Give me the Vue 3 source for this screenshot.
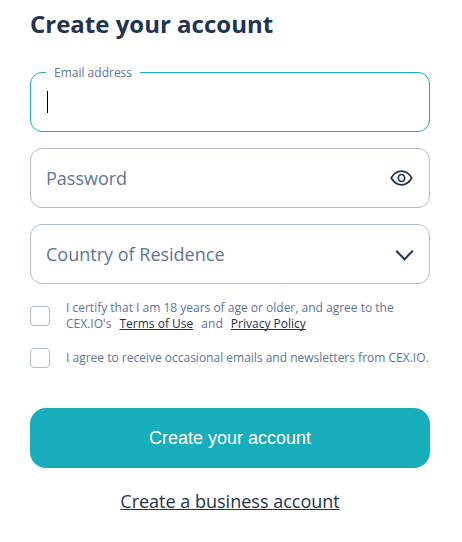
<template>
  <form class="signup" @submit.prevent>
    <h1 class="title">Create your account</h1>

    <fieldset class="field active">
      <legend>Email address</legend>
      <span class="caret"></span>
    </fieldset>

    <div class="field">
      <span class="placeholder">Password</span>
      <svg class="eye" width="24" height="18" viewBox="0 0 24 18" @click="showPassword = !showPassword">
        <path d="M1.200 9C4 4.300 7.700 2.200 11.500 2.200s7.500 2.100 10.300 6.800c-2.800 4.700-6.500 6.800-10.300 6.800S4 13.700 1.200 9z" />
        <ellipse cx="11.500" cy="9" rx="3.200" ry="3.500" />
      </svg>
    </div>

    <div class="field">
      <span class="placeholder">Country of Residence</span>
      <svg class="chevron" width="20" height="14" viewBox="0 0 20 14">
        <path d="M1.200 3.700l8.300 8.600 8.300-8.600" />
      </svg>
    </div>

    <div class="check-row">
      <input v-model="terms" type="checkbox" />
      <p>
        I certify that I am 18 years of age or older, and agree to the<br />
        CEX.IO's <a>Terms of Use</a> and <a>Privacy Policy</a>
      </p>
    </div>
    <div class="check-row news">
      <input v-model="newsletter" type="checkbox" />
      <p>I agree to receive occasional emails and newsletters from CEX.IO.</p>
    </div>

    <button class="submit" type="submit">Create your account</button>
    <a class="business">Create a business account</a>
  </form>
</template>

<script setup>
import { ref } from 'vue'

const showPassword = ref(false)
const terms = ref(false)
const newsletter = ref(false)
</script>

<style>
body { background: #fff; }
</style>

<style scoped>
.signup { box-sizing: border-box; width: 462px; height: 542px; padding: 8px 32px 0 30px; display: flex; flex-direction: column; font-family: "Open Sans", "Noto Sans", sans-serif; color: #22334d; }
.title { margin: 0 0 32px; font-size: 24px; line-height: 32px; font-weight: 700; }
.field { box-sizing: border-box; width: 400px; height: 60px; margin: 0 0 16px; padding: 0 16px 0 15px; border: 1px solid #aebbd0; border-radius: 12px; display: flex; align-items: center; justify-content: space-between; }
.active { display: block; height: 68px; margin-top: -8px; padding: 0 15px; border-color: #18adba; }
.active legend { height: 16px; padding: 0 8px; font-size: 12px; line-height: 18px; color: #5d7599; }
.caret { display: block; width: 1px; height: 22px; margin: 11px 0 0 1px; background: #000; }
.placeholder { font-size: 18px; line-height: 24px; color: #5d7599; }
.eye, .chevron { fill: none; stroke: #22334d; stroke-width: 2; }
.eye { margin-right: -1px; stroke-width: 1.700; }
.chevron { margin-right: -2px; }
.check-row { display: flex; align-items: center; gap: 16px; width: 410px; height: 32px; }
.check-row input { appearance: none; box-sizing: border-box; flex: none; width: 20px; height: 20px; margin: 0; border: 1px solid #aebbd0; border-radius: 4px; background: #fff; }
.check-row input:checked { background: #18adba; }
.check-row p { margin: 0; font-size: 12px; line-height: 16px; white-space: nowrap; color: #5d7599; }
.check-row a { margin: 0 5px; color: #22334d; text-decoration: underline; text-decoration-skip-ink: none; cursor: pointer; }
.news { margin-top: 10px; }
.submit { width: 400px; height: 60px; flex: none; margin: 34px 0 0; padding: 0; border: none; border-radius: 16px; background: #18adba; color: #fff; font-family: "Liberation Sans", Arial, sans-serif; font-size: 18px; cursor: pointer; }
.business { align-self: center; margin-top: 21px; font-size: 18px; line-height: 24px; text-decoration: underline; cursor: pointer; }
</style>
